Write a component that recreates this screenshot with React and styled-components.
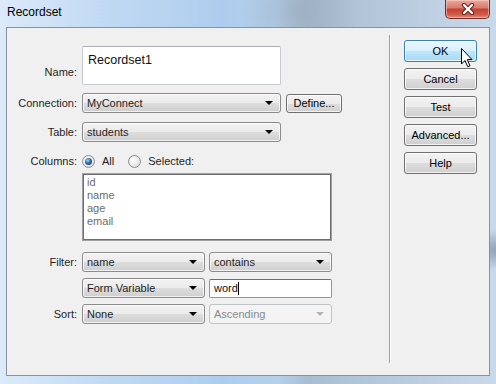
import React from 'react';
import styled, { createGlobalStyle } from 'styled-components';

const GlobalStyle = createGlobalStyle`
  html, body {
    margin: 0;
    padding: 0;
  }
  body {
    width: 496px;
    height: 384px;
    overflow: hidden;
    font-family: "Liberation Sans", Arial, sans-serif;
    font-size: 11px;
    color: #1e1e1e;
  }
`;

const Window = styled.div`
  position: relative;
  width: 496px;
  height: 384px;
  box-sizing: border-box;
  display: flex;
  flex-direction: column;
  padding: 0 6px 8px 6px;
  background:
    radial-gradient(circle at 300px 10px, rgba(150, 165, 180, 0.55) 0, rgba(150, 165, 180, 0) 60px),
    radial-gradient(ellipse at 500px 250px, rgba(80, 100, 125, 0.5) 0, rgba(80, 100, 125, 0) 40px),
    linear-gradient(90deg, #dceafa 0%, #c2daf3 20%, #aecdee 45%, #b5d0ec 56%, #a8bdd2 62%, #b4c7da 75%, #c8d9ea 100%);
`;

const TitleBar = styled.div`
  height: 27px;
  display: flex;
  align-items: flex-start;
`;

const Title = styled.div`
  margin: 6px 0 0 1px;
  font-size: 12px;
  line-height: 13px;
  color: #000;
`;

const CloseButton = styled.div`
  margin-left: auto;
  width: 45px;
  height: 19px;
  box-sizing: border-box;
  border: 1px solid #6b2d27;
  border-top: none;
  border-radius: 0 0 5px 5px;
  display: flex;
  align-items: center;
  justify-content: center;
  background: linear-gradient(180deg, #e9a99f 0%, #d9786b 45%, #c2402f 50%, #cf5a48 80%, #e2897a 100%);
  box-shadow: inset 0 0 0 1px rgba(255, 220, 210, 0.5);
`;

const Client = styled.div`
  flex: 1;
  display: flex;
  border: 1px solid #8593a2;
  background: #f0f0f0;
`;

const LeftPanel = styled.div`
  width: 382px;
  padding-top: 18px;
  box-sizing: border-box;
`;

const Separator = styled.div`
  width: 1px;
  margin: 7px 0 12px;
  background: #a0a0a0;
  border-right: 1px solid #ffffff;
`;

const RightPanel = styled.div`
  position: relative;
  padding: 12px 0 0 13px;
  display: flex;
  flex-direction: column;
  gap: 6px;
`;

const Row = styled.div`
  display: flex;
  align-items: ${(p) => p.$align || 'center'};
  margin-top: ${(p) => p.$top || 0}px;
  gap: ${(p) => p.$gap || 0}px;
`;

const Label = styled.div`
  width: 70px;
  margin-right: ${(p) => (p.$tight ? 1 : 5)}px;
  text-align: right;
  line-height: 13px;
  padding-bottom: ${(p) => p.$bottom || 0}px;
`;

const Indent = styled.div`
  width: ${(p) => p.$width || 75}px;
  flex: none;
`;

const TextBox = styled.div`
  width: ${(p) => p.$width}px;
  height: ${(p) => p.$height}px;
  box-sizing: border-box;
  background: #fff;
  border: 1px solid ${(p) => (p.$focused ? '#6a9fcf' : '#c8ccd1')};
  border-top-color: ${(p) => (p.$focused ? '#3d7bad' : '#abadb3')};
  border-radius: 2px;
  padding: ${(p) => p.$pad || '2px 4px'};
  font-size: ${(p) => p.$size || 11}px;
  line-height: 13px;
  color: #111;
`;

const Caret = styled.span`
  display: inline-block;
  width: 1px;
  height: 13px;
  vertical-align: top;
  background: #000;
`;

const Combo = styled.div`
  width: ${(p) => p.$width}px;
  height: 20px;
  box-sizing: border-box;
  display: flex;
  align-items: center;
  padding: 0 7px 0 4px;
  border: 1px solid ${(p) => (p.$disabled ? '#c1c4c7' : '#8b8b8b')};
  border-radius: 3px;
  background: ${(p) =>
    p.$disabled
      ? '#f4f4f4'
      : 'linear-gradient(180deg, #f3f3f3 0%, #ebebeb 50%, #dddddd 51%, #cfcfcf 100%)'};
  box-shadow: ${(p) => (p.$disabled ? 'none' : 'inset 0 0 0 1px rgba(255,255,255,0.7)')};
  color: ${(p) => (p.$disabled ? '#8a8a8a' : '#1e1e1e')};
`;

const ComboText = styled.span`
  flex: 1;
  line-height: 13px;
  white-space: nowrap;
`;

const Arrow = styled.span`
  width: 0;
  height: 0;
  border-left: 4px solid transparent;
  border-right: 4px solid transparent;
  border-top: 4px solid ${(p) => (p.$disabled ? '#b4b4b4' : '#000')};
`;

const PushButton = styled.div`
  width: ${(p) => p.$width || 73}px;
  height: ${(p) => p.$height || 22}px;
  box-sizing: border-box;
  display: flex;
  align-items: center;
  justify-content: center;
  border: 1px solid ${(p) => (p.$hot ? '#3c7fb1' : '#707070')};
  border-radius: 3px;
  background: ${(p) =>
    p.$hot
      ? 'linear-gradient(180deg, #eaf6fd 0%, #d9f0fc 50%, #bee6fd 51%, #a7d9f5 100%)'
      : 'linear-gradient(180deg, #f2f2f2 0%, #ebebeb 50%, #dddddd 51%, #cfcfcf 100%)'};
  box-shadow: inset 0 0 0 1px rgba(255, 255, 255, 0.75);
  color: #000;
  line-height: 13px;
`;

const Radio = styled.span`
  width: 13px;
  height: 13px;
  box-sizing: border-box;
  border-radius: 50%;
  border: 1px solid #8e8f8f;
  display: inline-flex;
  align-items: center;
  justify-content: center;
  background: radial-gradient(circle at 40% 35%, #ffffff 0%, #e8e8e8 55%, #cfcfcf 100%);
  &::after {
    content: '';
    width: 7px;
    height: 7px;
    border-radius: 50%;
    display: ${(p) => (p.$checked ? 'block' : 'none')};
    background: radial-gradient(circle at 40% 35%, #a9d6f7 0%, #2c6ba5 45%, #0e3a6c 100%);
  }
`;

const RadioText = styled.span`
  margin: 0 ${(p) => p.$after || 0}px 0 7px;
  line-height: 13px;
`;

const ListBox = styled.div`
  width: 250px;
  height: 68px;
  box-sizing: border-box;
  background: #fff;
  border: 1px solid #a0a0a0;
  box-shadow: inset 0 0 0 1px #6e6e6e;
  padding: 2px 4px;
`;

const ListItem = styled.div`
  line-height: 13px;
  color: #6d6d6d;
`;

const Pointer = styled.svg`
  position: absolute;
  left: 70px;
  top: 20px;
`;

const ComboBox = ({ value, width, disabled }) => (
  <Combo $width={width} $disabled={disabled}>
    <ComboText>{value}</ComboText>
    <Arrow $disabled={disabled} />
  </Combo>
);

const columns = ['id', 'name', 'age', 'email'];

const App = () => {
  return (
    <Window>
      <GlobalStyle />
      <TitleBar>
        <Title>Recordset</Title>
        <CloseButton>
          <svg width="14" height="12" viewBox="0 0 14 12">
            <path d="M3 2 L11 10 M11 2 L3 10" stroke="#5a1d18" strokeWidth="4.2" strokeLinecap="round" fill="none" />
            <path d="M3 2 L11 10 M11 2 L3 10" stroke="#ffffff" strokeWidth="2.4" strokeLinecap="round" fill="none" />
          </svg>
        </CloseButton>
      </TitleBar>

      <Client>
        <LeftPanel>
          <Row $align="flex-end">
            <Label $bottom={6}>Name:</Label>
            <TextBox $width={199} $height={39} $size={12.5} $pad="7px 5px">
              Recordset1
            </TextBox>
          </Row>

          <Row $top={8}>
            <Label>Connection:</Label>
            <ComboBox value="MyConnect" width={199} />
            <Indent $width={5} />
            <PushButton $width={56} $height={19}>Define...</PushButton>
          </Row>

          <Row $top={9}>
            <Label>Table:</Label>
            <ComboBox value="students" width={199} />
          </Row>

          <Row $top={13}>
            <Label>Columns:</Label>
            <Radio $checked />
            <RadioText $after={14}>All</RadioText>
            <Radio />
            <RadioText>Selected:</RadioText>
          </Row>

          <Row $top={5}>
            <Indent />
            <ListBox>
              {columns.map((c) => (
                <ListItem key={c}>{c}</ListItem>
              ))}
            </ListBox>
          </Row>

          <Row $top={11} $gap={4}>
            <Label $tight>Filter:</Label>
            <ComboBox value="name" width={123} />
            <ComboBox value="contains" width={123} />
          </Row>

          <Row $top={6} $gap={4}>
            <Indent $width={71} />
            <ComboBox value="Form Variable" width={123} />
            <TextBox $width={123} $height={19} $focused>
              word<Caret />
            </TextBox>
          </Row>

          <Row $top={6} $gap={4}>
            <Label $tight>Sort:</Label>
            <ComboBox value="None" width={123} />
            <ComboBox value="Ascending" width={123} disabled />
          </Row>
        </LeftPanel>

        <Separator />

        <RightPanel>
          <PushButton $hot>OK</PushButton>
          <PushButton>Cancel</PushButton>
          <PushButton>Test</PushButton>
          <PushButton>Advanced...</PushButton>
          <PushButton>Help</PushButton>
          <Pointer width="13" height="20" viewBox="0 0 13 20">
            <path d="M0.5 0.5 L0.5 16 L4 12.5 L6.8 18.8 L9 17.8 L6.3 11.6 L11 11.6 Z" fill="#fff" stroke="#000" strokeWidth="1" />
          </Pointer>
        </RightPanel>
      </Client>
    </Window>
  );
};

export default App;
